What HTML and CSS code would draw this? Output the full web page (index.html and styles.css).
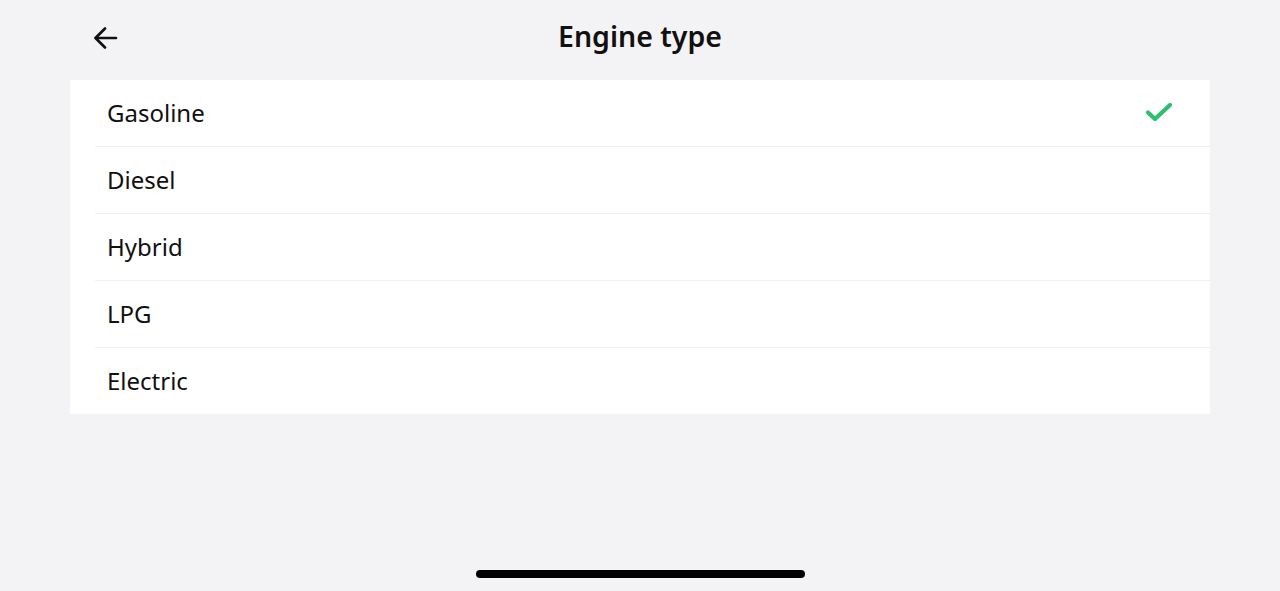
FILE: index.html
```html
<!DOCTYPE html>
<html lang="en">
<head>
<meta charset="utf-8">
<title>Engine type</title>
<link rel="stylesheet" href="styles.css">
</head>
<body>
<div class="screen">
  <header class="topbar">
    <button class="back" aria-label="Back">
      <svg width="26" height="26" viewBox="0 0 26 26" fill="none" stroke="#111" stroke-width="2.7" stroke-linecap="round" stroke-linejoin="round"><path d="M23 13H3"/><path d="M12 3.5L2.5 13L12 22.5"/></svg>
    </button>
    <h1 class="title">Engine type</h1>
  </header>
  <ul class="list">
    <li class="item"><span class="label">Gasoline</span>
      <svg class="check" width="28" height="20" viewBox="0 0 28 20" fill="none" stroke="#2cbf6e" stroke-width="4.2" stroke-linecap="round" stroke-linejoin="round"><path d="M3 10.5L10 17L25 3"/></svg>
    </li>
    <li class="item"><span class="label">Diesel</span></li>
    <li class="item"><span class="label">Hybrid</span></li>
    <li class="item"><span class="label">LPG</span></li>
    <li class="item"><span class="label">Electric</span></li>
  </ul>
  <div class="spacer"></div>
  <div class="home-indicator"></div>
</div>
</body>
</html>
```
FILE: styles.css
```css
* { box-sizing: border-box; }
html, body { margin: 0; padding: 0; }
body {
  background: #f3f3f6;
  font-family: "Noto Sans", "Open Sans", sans-serif;
  color: #111;
}
.screen {
  width: 1280px;
  height: 591px;
  display: flex;
  flex-direction: column;
}
.topbar {
  height: 80px;
  display: flex;
  align-items: center;
  justify-content: center;
  position: relative;
  padding-bottom: 8px;
}
.back {
  position: absolute;
  left: 93px;
  top: 25px;
  width: 26px;
  height: 26px;
  padding: 0;
  border: 0;
  background: none;
  display: flex;
}
.title {
  margin: 0;
  font-size: 28.5px;
  font-weight: 600;
  letter-spacing: 0;
}
.list {
  list-style: none;
  margin: 0 70px;
  padding: 0;
  background: #fff;
}
.item {
  height: 67px;
  margin-left: 25px;
  padding-left: 12px;
  padding-right: 37px;
  display: flex;
  align-items: center;
  justify-content: space-between;
  border-top: 1px solid #efeff1;
}
.item:first-child { border-top: 0; height: 66px; }
.label {
  font-size: 24px;
  line-height: 1;
  color: #111;
}
.check { margin-top: -2px; }
.spacer { flex: 1; }
.home-indicator {
  align-self: center;
  width: 329px;
  height: 8px;
  border-radius: 4px;
  background: #000;
  margin-bottom: 13px;
}
```
